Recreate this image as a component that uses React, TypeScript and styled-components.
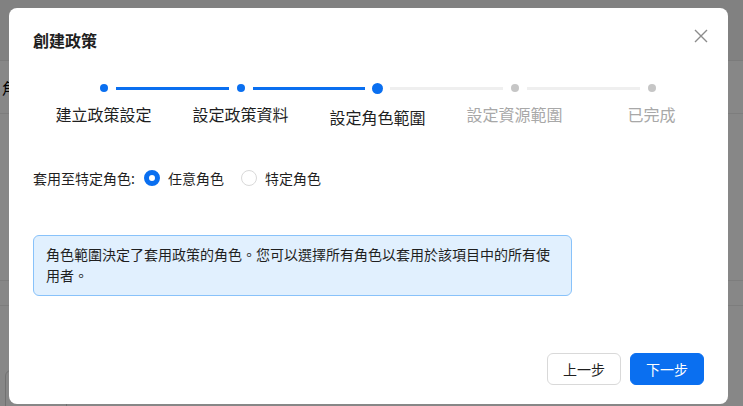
import React from 'react';
import styled, { createGlobalStyle } from 'styled-components';

const GlobalStyle = createGlobalStyle`
  html, body {
    margin: 0;
    padding: 0;
    width: 743px;
    height: 406px;
    overflow: hidden;
    font-family: "Noto Sans CJK TC", "Noto Sans", "Liberation Sans", sans-serif;
    color: #1f1f1f;
  }
`;

const steps = ['建立政策設定', '設定政策資料', '設定角色範圍', '設定資源範圍', '已完成'];
const current = 2;

export default function App(): JSX.Element {
  return (
    <Page>
      <GlobalStyle />
      <BackHeader />
      <BackRow>
        <BackText>角色</BackText>
      </BackRow>
      <BackSpacer />
      <BackRow small />
      <BackFooter>
        <BackBox />
      </BackFooter>

      <Overlay>
        <Modal>
          <Header>
            <Title>創建政策</Title>
            <CloseButton>
              <svg width="14" height="14" viewBox="0 0 14 14">
                <path d="M1 1L13 13M13 1L1 13" stroke="#8c8c8c" strokeWidth="1.4" />
              </svg>
            </CloseButton>
          </Header>

          <Steps>
            {steps.map((s, i) => (
              <Step key={s}>
                <Track>
                  <Half $on={i <= current} $hidden={i === 0} />
                  <Dot $on={i <= current} $current={i === current} />
                  <Half $on={i + 1 <= current} $hidden={i === steps.length - 1} />
                </Track>
                <StepLabel $on={i <= current} $current={i === current}>
                  {s}
                </StepLabel>
              </Step>
            ))}
          </Steps>

          <RadioRow>
            <FieldLabel>套用至特定角色:</FieldLabel>
            <RadioOption>
              <RadioCircle $checked />
              任意角色
            </RadioOption>
            <RadioOption>
              <RadioCircle />
              特定角色
            </RadioOption>
          </RadioRow>

          <InfoBox>
            角色範圍決定了套用政策的角色。您可以選擇所有角色以套用於該項目中的所有使用者。
          </InfoBox>

          <Footer>
            <Button>上一步</Button>
            <Button $primary>下一步</Button>
          </Footer>
        </Modal>
      </Overlay>
    </Page>
  );
}

const Page = styled.div`
  position: relative;
  width: 743px;
  height: 406px;
  background: #ffffff;
  overflow: hidden;
`;

const BackHeader = styled.div`
  height: 60px;
  background: #f3f3f3;
  border-bottom: 1px solid #e8e8e8;
`;

const BackRow = styled.div<{ small?: boolean }>`
  height: ${(p) => (p.small ? '24px' : '52px')};
  border-bottom: 1px solid #ececec;
  display: flex;
  align-items: center;
  padding-left: 2px;
`;

const BackText = styled.span`
  font-size: 15px;
  color: #000;
`;

const BackSpacer = styled.div`
  height: 166px;
  border-bottom: 1px solid #ececec;
`;

const BackFooter = styled.div`
  padding: 64px 0 0 5px;
`;

const BackBox = styled.div`
  width: 60px;
  height: 40px;
  border: 1px solid #d6d6d6;
  border-radius: 6px;
`;

const Overlay = styled.div`
  position: absolute;
  inset: 0;
  background: rgba(0, 0, 0, 0.47);
  padding: 8px 0 0 9px;
`;

const Modal = styled.div`
  width: 719px;
  height: 396px;
  box-sizing: border-box;
  background: #fff;
  border-radius: 8px;
  padding: 20px 24px 19px 24px;
  display: flex;
  flex-direction: column;
`;

const Header = styled.div`
  display: flex;
  align-items: center;
  justify-content: space-between;
  height: 24px;
`;

const Title = styled.div`
  font-size: 16px;
  font-weight: 600;
  line-height: 24px;
  color: #1f1f1f;
`;

const CloseButton = styled.div`
  width: 14px;
  height: 14px;
  display: flex;
  margin-right: -4px;
  margin-top: -8px;
`;

const Steps = styled.div`
  display: grid;
  grid-template-columns: repeat(5, 137px);
  margin: 31px -14px 0 2px;
`;

const Step = styled.div`
  display: flex;
  flex-direction: column;
  align-items: center;
`;

const Track = styled.div`
  width: 100%;
  height: 10px;
  display: flex;
  align-items: center;
`;

const Half = styled.div<{ $on: boolean; $hidden: boolean }>`
  flex: 1;
  height: 3px;
  background: ${(p) => (p.$hidden ? 'transparent' : p.$on ? '#0a6ff0' : '#efefef')};
`;

const Dot = styled.div<{ $on: boolean; $current: boolean }>`
  width: ${(p) => (p.$current ? '11px' : '8px')};
  height: ${(p) => (p.$current ? '11px' : '8px')};
  border-radius: 50%;
  margin: 0 ${(p) => (p.$current ? '7px' : '8px')};
  background: ${(p) => (p.$on ? '#0a6ff0' : '#c6c6c6')};
  flex-shrink: 0;
`;

const StepLabel = styled.div<{ $on: boolean; $current: boolean }>`
  margin-top: ${(p) => (p.$current ? '12px' : '9px')};
  font-size: 16px;
  line-height: 24px;
  color: ${(p) => (p.$on ? '#1f1f1f' : '#a8a8a8')};
  white-space: nowrap;
`;

const RadioRow = styled.div`
  display: flex;
  align-items: center;
  margin-top: 38px;
  font-size: 14px;
  line-height: 22px;
`;

const FieldLabel = styled.span`
  margin-right: 9px;
`;

const RadioOption = styled.label`
  display: flex;
  align-items: center;
  gap: 8px;
  margin-right: 17px;
`;

const RadioCircle = styled.span<{ $checked?: boolean }>`
  width: 16px;
  height: 16px;
  box-sizing: border-box;
  border-radius: 50%;
  background: #fff;
  border: ${(p) => (p.$checked ? '5px solid #0a6ff0' : '1px solid #d9d9d9')};
`;

const InfoBox = styled.div`
  width: 539px;
  box-sizing: border-box;
  margin-top: 46px;
  padding: 8px 12px 9px 12px;
  background: #e1f0fe;
  border: 1px solid #88c2fa;
  border-radius: 6px;
  font-size: 14px;
  line-height: 21px;
  color: #1f1f1f;
`;

const Footer = styled.div`
  margin-top: auto;
  display: flex;
  justify-content: flex-end;
  gap: 9px;
`;

const Button = styled.button<{ $primary?: boolean }>`
  width: 74px;
  height: 32px;
  border-radius: 6px;
  font-family: inherit;
  font-size: 14px;
  border: 1px solid ${(p) => (p.$primary ? '#0a6ff0' : '#d9d9d9')};
  background: ${(p) => (p.$primary ? '#0a6ff0' : '#fff')};
  color: ${(p) => (p.$primary ? '#fff' : '#1f1f1f')};
  cursor: pointer;
`;
